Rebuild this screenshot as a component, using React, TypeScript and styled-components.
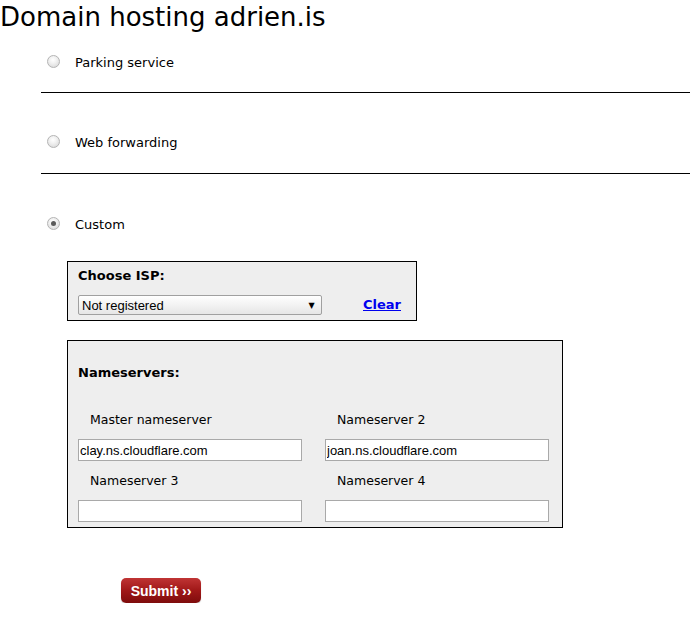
import React, { useState } from "react";
import styled, { createGlobalStyle } from "styled-components";

const GlobalStyle = createGlobalStyle`
    html, body {
        margin: 0;
        padding: 0;
        background: #ffffff;
        color: #000000;
        font-family: "DejaVu Sans", Verdana, sans-serif;
    }
`;

type Option = { id: string; label: string };

const options: Option[] = [
    { id: "parking", label: "Parking service" },
    { id: "forward", label: "Web forwarding" },
    { id: "custom", label: "Custom" },
];

const nameservers = [
    { label: "Master nameserver", value: "clay.ns.cloudflare.com" },
    { label: "Nameserver 2", value: "joan.ns.cloudflare.com" },
    { label: "Nameserver 3", value: "" },
    { label: "Nameserver 4", value: "" },
];

const App = () => {
    const [selected, setSelected] = useState<string>("custom");
    const [servers, setServers] = useState<string[]>(
        nameservers.map((n) => n.value)
    );

    const onChangeServer = (index: number, value: string) => {
        setServers((prev) => prev.map((v, i) => (i === index ? value : v)));
    };

    return (
        <>
            <GlobalStyle />
            <SPage>
                <STitle>Domain hosting adrien.is</STitle>
                <SOptions>
                    {options.map((option) => (
                        <SOption key={option.id}>
                            <SOptionRow>
                                <SRadio
                                    type="radio"
                                    name="hosting"
                                    checked={selected === option.id}
                                    onChange={() => setSelected(option.id)}
                                />
                                <SOptionLabel>{option.label}</SOptionLabel>
                            </SOptionRow>
                            {option.id === "custom" ? (
                                <SPanels>
                                    <SIspBox>
                                        <SBoxTitle>Choose ISP:</SBoxTitle>
                                        <SIspRow>
                                            <SSelectWrap>
                                                <SSelect defaultValue="none">
                                                    <option value="none">
                                                        Not registered
                                                    </option>
                                                </SSelect>
                                                <SArrow>▼</SArrow>
                                            </SSelectWrap>
                                            <SClear href="#">Clear</SClear>
                                        </SIspRow>
                                    </SIspBox>
                                    <SNsBox>
                                        <SBoxTitle>Nameservers:</SBoxTitle>
                                        <SNsGrid>
                                            {nameservers.map((ns, index) => (
                                                <SField key={ns.label}>
                                                    <SFieldLabel>
                                                        {ns.label}
                                                    </SFieldLabel>
                                                    <SInput
                                                        type="text"
                                                        value={servers[index]}
                                                        onChange={(e) =>
                                                            onChangeServer(
                                                                index,
                                                                e.target.value
                                                            )
                                                        }
                                                    />
                                                </SField>
                                            ))}
                                        </SNsGrid>
                                    </SNsBox>
                                </SPanels>
                            ) : null}
                        </SOption>
                    ))}
                </SOptions>
                <SActions>
                    <SSubmit type="button">Submit ››</SSubmit>
                </SActions>
            </SPage>
        </>
    );
};

const SPage = styled.div`
    width: 690px;
`;

const STitle = styled.h1`
    margin: 2px 0 0;
    font-family: "DejaVu Sans", Verdana, sans-serif;
    font-size: 26px;
    font-weight: normal;
    line-height: 30px;
`;

const SOptions = styled.div`
    margin-left: 41px;
`;

const SOption = styled.div`
    padding: 40px 0 20px;
    border-bottom: 1px solid #000;
    &:first-child {
        padding: 21px 0 19px;
    }
    &:last-child {
        border-bottom: none;
        padding: 41px 0 0;
    }
`;

const SOptionRow = styled.label`
    display: flex;
    align-items: center;
    height: 20px;
`;

const SRadio = styled.input`
    appearance: none;
    box-sizing: border-box;
    width: 13px;
    height: 13px;
    margin: 0 15px 3px 6px;
    border-radius: 50%;
    border: 1px solid #b4b4b4;
    background: radial-gradient(circle at 45% 35%, #ffffff 0%, #f0f0f0 40%, #d2d2d2 100%);
    display: grid;
    place-items: center;
    &:checked::after {
        content: "";
        width: 5px;
        height: 5px;
        border-radius: 50%;
        background: #5a5a5a;
    }
`;

const SOptionLabel = styled.span`
    font-size: 13px;
    line-height: 16px;
`;

const SPanels = styled.div`
    display: flex;
    flex-direction: column;
    align-items: flex-start;
    gap: 19px;
    margin: 26px 0 0 26px;
`;

const SBox = styled.div`
    box-sizing: border-box;
    background: #eeeeee;
    border: 1px solid #000;
    padding: 0 10px;
`;

const SIspBox = styled(SBox)`
    width: 350px;
    height: 60px;
    padding-top: 6px;
`;

const SNsBox = styled(SBox)`
    width: 496px;
    height: 188px;
    padding-top: 24px;
`;

const SBoxTitle = styled.div`
    font-size: 13px;
    font-weight: bold;
    line-height: 16px;
`;

const SIspRow = styled.div`
    display: flex;
    align-items: center;
    margin-top: 11px;
`;

const SSelectWrap = styled.div`
    box-sizing: border-box;
    display: flex;
    align-items: center;
    width: 244px;
    height: 20px;
    border: 1px solid #a0a0a0;
    border-radius: 2px;
    background: linear-gradient(#ffffff, #e6e6e6);
`;

const SSelect = styled.select`
    appearance: none;
    flex: 1;
    height: 18px;
    border: none;
    background: transparent;
    padding: 0 0 0 3px;
    font-family: "Liberation Sans", Arial, sans-serif;
    font-size: 13px;
    color: #000;
    outline: none;
`;

const SArrow = styled.span`
    font-size: 8px;
    width: 19px;
    text-align: center;
    color: #000;
`;

const SClear = styled.a`
    margin-left: 41px;
    margin-bottom: 1px;
    font-size: 13px;
    font-weight: bold;
    color: #0000ee;
    text-decoration: underline;
`;

const SNsGrid = styled.div`
    display: grid;
    grid-template-columns: 224px 224px;
    column-gap: 23px;
    row-gap: 12px;
    margin-top: 31px;
`;

const SField = styled.div`
    display: flex;
    flex-direction: column;
`;

const SFieldLabel = styled.div`
    font-size: 12.5px;
    line-height: 16px;
    padding-left: 12px;
    margin-bottom: 11px;
`;

const SInput = styled.input`
    box-sizing: border-box;
    width: 224px;
    height: 22px;
    margin: 0;
    padding: 0 1px;
    border: 1px solid #a9a9a9;
    background: #fff;
    font-family: "Liberation Sans", Arial, sans-serif;
    font-size: 13px;
    color: #000;
    outline: none;
`;

const SActions = styled.div`
    padding: 50px 0 0 121px;
`;

const SSubmit = styled.button`
    box-sizing: border-box;
    width: 80px;
    height: 25px;
    padding: 0;
    border: none;
    border-radius: 5px;
    background: linear-gradient(#c03434, #a01818 50%, #7e0c0c);
    box-shadow: 0 1px 1px rgba(0, 0, 0, 0.25);
    color: #fff;
    font-family: "Liberation Sans", Arial, sans-serif;
    font-size: 14px;
    font-weight: bold;
    cursor: pointer;
`;

export default App;
